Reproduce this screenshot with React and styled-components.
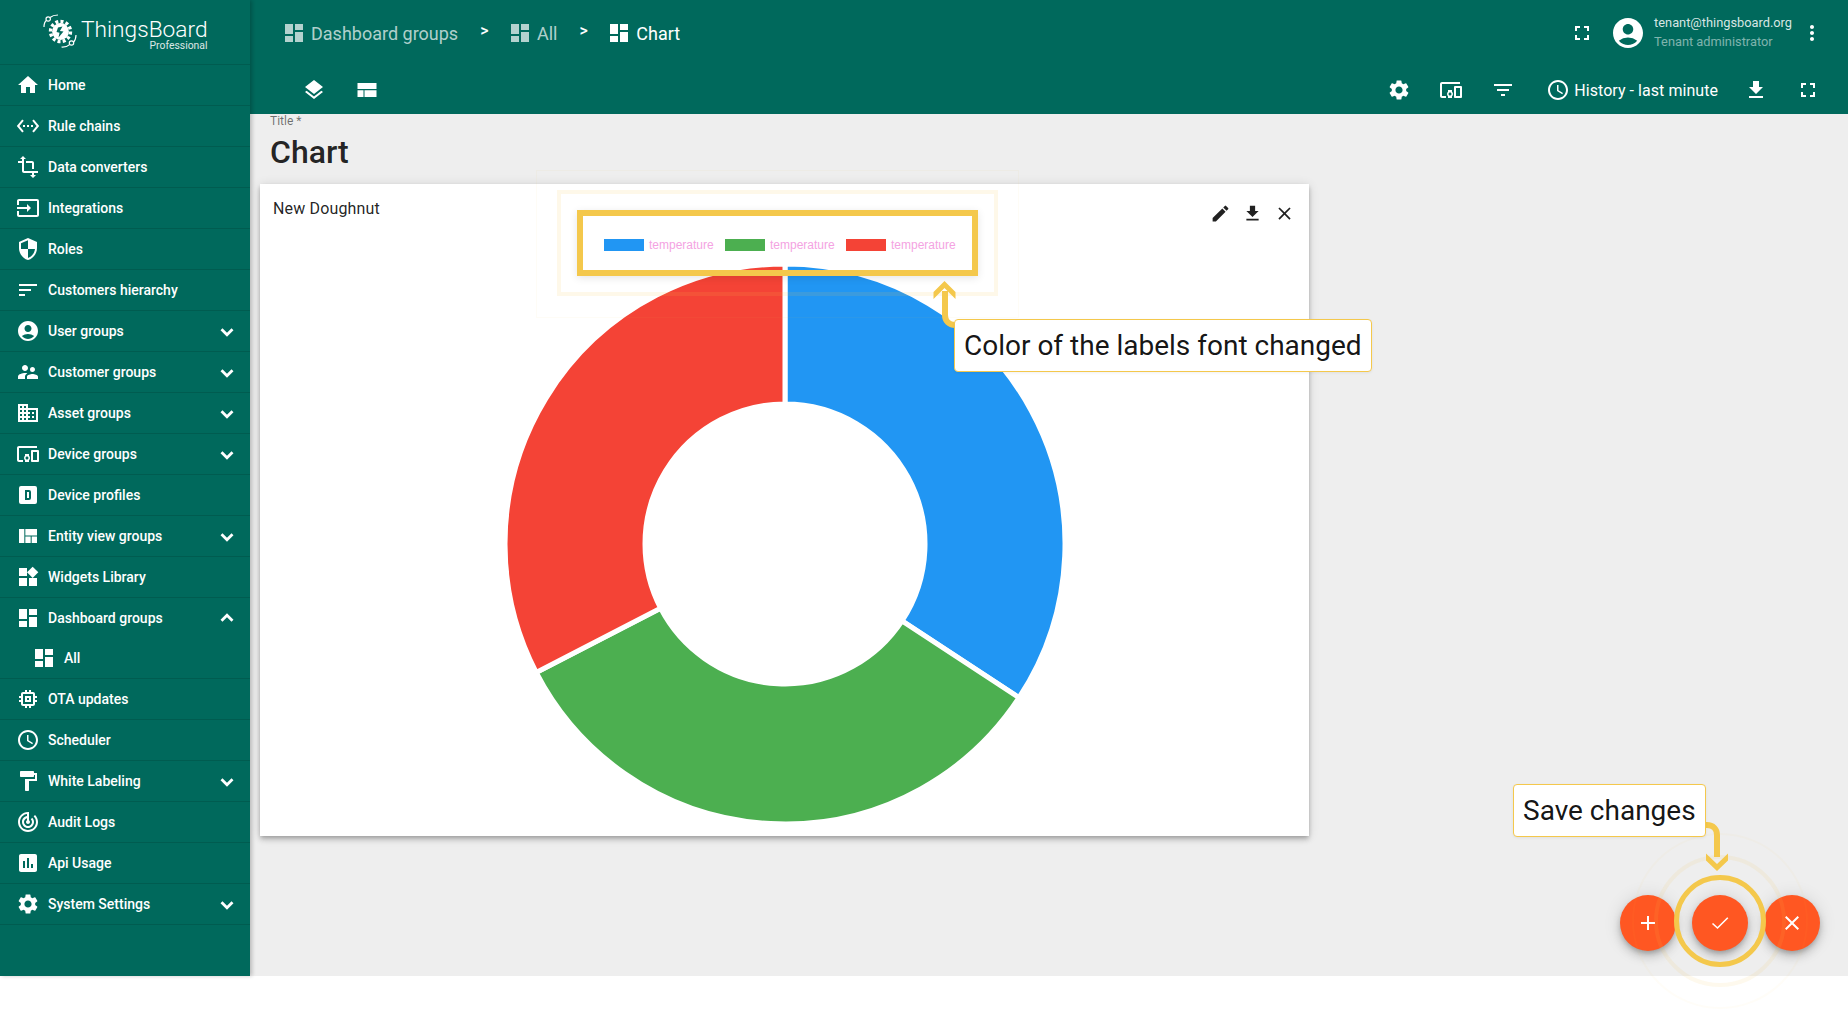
import React from "react";
import styled, { createGlobalStyle } from "styled-components";
import {
  MdHome, MdSettingsEthernet, MdTransform, MdInput, MdSecurity, MdSort, MdAccountCircle,
  MdSupervisorAccount, MdDomain, MdDevicesOther, MdViewQuilt, MdWidgets, MdDashboard, MdMemory,
  MdSchedule, MdFormatPaint, MdTrackChanges, MdInsertChart, MdSettings,
  MdLayers, MdFullscreen, MdFileDownload, MdFilterList, MdMoreVert, MdEdit, MdClose, MdAdd,
} from "react-icons/md";

const Global = createGlobalStyle`
  html, body { margin: 0; padding: 0; background: #fff; }
  body { font-family: Roboto, "Liberation Sans", sans-serif; }
  * { box-sizing: border-box; }
`;

const Page = styled.div`
  position: relative;
  width: 1848px;
  height: 1010px;
  overflow: hidden;
  background: #fff;
`;
const Shell = styled.div`
  display: flex;
  height: 976px;
`;
const Sidebar = styled.nav`
  flex: 0 0 250px;
  background: #00695c;
  color: #fff;
  box-shadow: 2px 0 4px rgba(0, 0, 0, 0.22);
  position: relative;
  z-index: 2;
`;
const LogoBar = styled.div`
  height: 65px;
  border-bottom: 1px solid rgba(0, 0, 0, 0.12);
  display: flex;
  align-items: flex-start;
  padding: 14px 0 0 43px;
`;
const LogoText = styled.div`
  margin-left: 4px;
  display: flex;
  flex-direction: column;
  align-items: flex-end;
  color: #fff;
`;
const LogoName = styled.span`
  font-size: 22.7px;
  font-weight: 300;
  line-height: 22px;
  margin-top: 5px;
`;
const LogoSub = styled.span`
  font-size: 10.4px;
  line-height: 10px;
  opacity: 0.85;
`;
const MenuRow = styled.div`
  height: ${(p) => (p.$open ? 40 : 41)}px;
  display: flex;
  align-items: center;
  gap: 8px;
  padding-left: ${(p) => (p.$child ? 32 : 16)}px;
  padding-right: 11.5px;
  font-size: 14px;
  font-weight: 500;
  border-bottom: ${(p) => (p.$open ? "0" : "1px solid rgba(0,0,0,0.12)")};
  svg { flex: none; }
`;
const MenuLabel = styled.span`
  flex: 1;
`;
const ChevronSvg = styled.svg`
  fill: none;
  stroke: currentColor;
  stroke-width: 2.8;
  margin-top: ${(p) => (p.$up ? 0 : 1)}px;
`;
const Chevron = ({ up }) => (
  <ChevronSvg $up={up} width="24" height="24" viewBox="0 0 24 24">
    <path d={up ? "M6.500 14.700 12 9.200l5.500 5.500" : "M6.500 9.300 12 14.800l5.500-5.500"} />
  </ChevronSvg>
);
const Main = styled.main`
  flex: 1;
  display: flex;
  flex-direction: column;
  background: #eeeeee;
  min-width: 0;
`;
const TopBar = styled.header`
  height: 114px;
  background: #00695c;
  color: #fff;
  display: flex;
  flex-direction: column;
`;
const TopRow = styled.div`
  height: 66px;
  display: flex;
  align-items: center;
  padding: 0 24px 0 32px;
`;
const Crumb = styled.span`
  display: flex;
  align-items: center;
  gap: 5px;
  font-size: 18px;
  color: ${(p) => (p.$current ? "#fff" : "rgba(255,255,255,0.7)")};
`;
const CrumbSep = styled.span`
  font-size: 16px;
  font-weight: 500;
  margin: -5px 19.5px 0 22px;
`;
const Spacer = styled.div`
  flex: 1;
`;
const IconBtn = styled.span`
  flex: none;
  width: ${(p) => p.$w || 40}px;
  height: 40px;
  display: flex;
  align-items: center;
  justify-content: center;
  color: #fff;
`;
const AvatarBtn = styled(IconBtn)`
  margin-left: 8px;
`;
const User = styled.div`
  display: flex;
  flex-direction: column;
  margin: -2px 8px 0 8px;
  font-size: 12.8px;
  gap: 4px;
`;
const UserMail = styled.span`
  line-height: 15px;
  color: rgba(255, 255, 255, 0.85);
`;
const UserRole = styled.span`
  line-height: 15px;
  color: rgba(255, 255, 255, 0.5);
`;
const ToolRow = styled.div`
  height: 48px;
  display: flex;
  align-items: center;
  gap: 12px;
  padding: 0 20px 0 44px;
`;
const History = styled.span`
  display: flex;
  align-items: center;
  gap: 4px;
  font-size: 16px;
  letter-spacing: 0.05px;
  margin: 0 6px 0 11px;
`;
const Content = styled.div`
  flex: 1;
  padding: 0 0 0 10px;
`;
const TitleBlock = styled.div`
  height: 70px;
  padding: 1px 0 0 10px;
`;
const TitleLabel = styled.div`
  font-size: 12px;
  line-height: 13px;
  color: rgba(0, 0, 0, 0.54);
`;
const TitleText = styled.div`
  font-size: 32px;
  font-weight: 500;
  line-height: 38px;
  margin-top: 5px;
  color: rgba(0, 0, 0, 0.87);
`;
const Card = styled.section`
  width: 1049px;
  height: 652px;
  background: #fff;
  box-shadow: 0 2px 4px -1px rgba(0, 0, 0, 0.2), 0 4px 5px rgba(0, 0, 0, 0.14), 0 1px 10px rgba(0, 0, 0, 0.12);
  display: flex;
  flex-direction: column;
  align-items: center;
`;
const CardHead = styled.div`
  width: 100%;
  height: 54px;
  display: flex;
  justify-content: space-between;
  padding: 13px 9px 0 13px;
`;
const CardTitle = styled.div`
  font-size: 16px;
  line-height: 24px;
  letter-spacing: 0.15px;
  color: rgba(0, 0, 0, 0.87);
`;
const CardActions = styled.div`
  display: flex;
  align-items: flex-start;
`;
const CardBtn = styled.span`
  width: 32px;
  height: 32px;
  display: flex;
  align-items: center;
  justify-content: center;
  color: rgba(0, 0, 0, 0.87);
`;
const Legend = styled.div`
  display: flex;
  align-items: center;
  height: 14px;
  margin: 0 9.6px 12px 0;
  font-family: "Liberation Sans", Arial, sans-serif;
  font-size: 12px;
  color: #f4a3e2;
`;
const LegendItem = styled.span`
  display: flex;
  align-items: center;
  gap: 5.3px;
  margin-left: 11px;
  &:first-child { margin-left: 0; }
`;
const Swatch = styled.i`
  display: block;
  width: 40px;
  height: 12px;
  background: ${(p) => p.$color};
`;
const Chart = styled.svg`
  display: block;
  flex: none;
`;
const FrameMain = styled.div`
  position: absolute;
  left: 577px;
  top: 210px;
  width: 401px;
  height: 66px;
  border: 6px solid #f4c84c;
  box-shadow: 0 2px 8px rgba(0, 0, 0, 0.1);
`;
const FrameHalo = styled.div`
  position: absolute;
  left: 557px;
  top: 190px;
  width: 441px;
  height: 106px;
  border: 4px solid rgba(244, 200, 76, 0.12);
`;
const FrameHaloOuter = styled.div`
  position: absolute;
  left: 536px;
  top: 170px;
  width: 483px;
  height: 148px;
  border: 1px solid rgba(244, 200, 76, 0.05);
`;
const Callout = styled.div`
  position: absolute;
  left: ${(p) => p.$x}px;
  top: ${(p) => p.$y}px;
  height: 53px;
  display: flex;
  align-items: center;
  padding: 0 9px;
  background: #fff;
  border: 1px solid #f4c84c;
  border-radius: 4px;
  font-size: 28px;
  color: rgba(0, 0, 0, 0.93);
  white-space: nowrap;
  box-shadow: 0 1px 3px rgba(0, 0, 0, 0.06);
`;
const ArrowLayer = styled.svg`
  position: absolute;
  left: 0;
  top: 0;
  pointer-events: none;
`;
const Fab = styled.span`
  position: absolute;
  left: ${(p) => p.$x - 28}px;
  top: 895px;
  width: 56px;
  height: 56px;
  border-radius: 50%;
  background: #ff5722;
  color: #fff;
  display: flex;
  align-items: center;
  justify-content: center;
  box-shadow: 0 3px 5px -1px rgba(0, 0, 0, 0.2), 0 6px 10px rgba(0, 0, 0, 0.14), 0 1px 18px rgba(0, 0, 0, 0.12);
`;
const Ring = styled.div`
  position: absolute;
  left: ${(p) => 1720 - p.$r}px;
  top: ${(p) => 921 - p.$r}px;
  width: ${(p) => p.$r * 2}px;
  height: ${(p) => p.$r * 2}px;
  border-radius: 50%;
  border: ${(p) => p.$w}px solid ${(p) => p.$color};
`;

const DBox = ({ size = 24 }) => (
  <svg width={size} height={size} viewBox="0 0 24 24" fill="currentColor">
    <path fillRule="evenodd" d="M9 7v10h4a2 2 0 0 0 2-2V9a2 2 0 0 0-2-2H9m2 2h2v6h-2V9M5 3h14a2 2 0 0 1 2 2v14a2 2 0 0 1-2 2H5a2 2 0 0 1-2-2V5a2 2 0 0 1 2-2Z" />
  </svg>
);
const TableIcon = ({ size = 24 }) => (
  <svg width={size} height={size} viewBox="0 0 24 24" fill="currentColor">
    <path d="M2.500 5h19v6h-19zM2.500 12.200h6V19h-6zM9.500 12.200h12V19h-12z" />
  </svg>
);
const ThinCheck = () => (
  <svg width="24" height="24" viewBox="0 0 24 24" fill="none" stroke="currentColor" strokeWidth="1.6">
    <path d="M4.500 12.500 9.500 17 19.800 6.800" />
  </svg>
);
const Logo = () => (
  <svg width="34" height="34" viewBox="0 0 34 34" fill="none" stroke="#fff">
    <path d="M1 13C1 10 2.500 7 3.600 6.200M7 3.500C9 1.800 12 1 15 1" strokeWidth="1.2" />
    <circle cx="5.200" cy="5" r="2.200" strokeWidth="1.2" />
    <path d="M33 21c0 3-1.300 6-2.600 7.200M26.600 30.600C24.600 32.400 21.400 33.200 18.500 33" strokeWidth="1.2" />
    <circle cx="28.500" cy="29" r="2.200" strokeWidth="1.2" />
    <circle cx="17.500" cy="17.500" r="8.400" fill="#fff" stroke="none" />
    <circle cx="17.500" cy="17.500" r="10" strokeWidth="3.400" strokeDasharray="3 2.200" />
    <path d="M15 13.500l4.500-1-2.600 4.500 3.600.6-5 5.800 1-4.600-3-.7z" fill="#00695c" stroke="none" />
  </svg>
);

const arc = (deg, r) => {
  const a = ((deg - 90) * Math.PI) / 180;
  return `${280 + r * Math.cos(a)} ${280 + r * Math.sin(a)}`;
};
const slice = (from, to) =>
  `M${arc(from, 280)}A280 280 0 0 1 ${arc(to, 280)}L${arc(to, 140)}A140 140 0 0 0 ${arc(from, 140)}Z`;

const SLICES = [
  { from: 0, to: 123.3, color: "#2196f3" },
  { from: 123.3, to: 242.7, color: "#4caf50" },
  { from: 242.7, to: 360, color: "#f44336" },
];
const MENU = [
  { label: "Home", icon: MdHome },
  { label: "Rule chains", icon: MdSettingsEthernet },
  { label: "Data converters", icon: MdTransform },
  { label: "Integrations", icon: MdInput },
  { label: "Roles", icon: MdSecurity },
  { label: "Customers hierarchy", icon: MdSort },
  { label: "User groups", icon: MdAccountCircle, more: true },
  { label: "Customer groups", icon: MdSupervisorAccount, more: true },
  { label: "Asset groups", icon: MdDomain, more: true },
  { label: "Device groups", icon: MdDevicesOther, more: true },
  { label: "Device profiles", icon: DBox },
  { label: "Entity view groups", icon: MdViewQuilt, more: true },
  { label: "Widgets Library", icon: MdWidgets },
  { label: "Dashboard groups", icon: MdDashboard, open: true },
  { label: "All", icon: MdDashboard, child: true },
  { label: "OTA updates", icon: MdMemory },
  { label: "Scheduler", icon: MdSchedule },
  { label: "White Labeling", icon: MdFormatPaint, more: true },
  { label: "Audit Logs", icon: MdTrackChanges },
  { label: "Api Usage", icon: MdInsertChart },
  { label: "System Settings", icon: MdSettings, more: true },
];

export default function App() {
  return (
    <Page>
      <Global />
      <Shell>
        <Sidebar>
          <LogoBar>
            <Logo />
            <LogoText>
              <LogoName>ThingsBoard</LogoName>
              <LogoSub>Professional</LogoSub>
            </LogoText>
          </LogoBar>
          {MENU.map(({ label, icon: Icon, more, open, child }) => (
            <MenuRow key={label} $child={child} $open={open}>
              <Icon size={24} />
              <MenuLabel>{label}</MenuLabel>
              {more && <Chevron />}
              {open && <Chevron up />}
            </MenuRow>
          ))}
        </Sidebar>
        <Main>
          <TopBar>
            <TopRow>
              <Crumb><MdDashboard size={24} />Dashboard groups</Crumb>
              <CrumbSep>&gt;</CrumbSep>
              <Crumb><MdDashboard size={24} />All</Crumb>
              <CrumbSep>&gt;</CrumbSep>
              <Crumb $current><MdDashboard size={24} />Chart</Crumb>
              <Spacer />
              <IconBtn><MdFullscreen size={24} /></IconBtn>
              <AvatarBtn $w={36}><MdAccountCircle size={36} /></AvatarBtn>
              <User>
                <UserMail>tenant@thingsboard.org</UserMail>
                <UserRole>Tenant administrator</UserRole>
              </User>
              <IconBtn $w={24}><MdMoreVert size={24} /></IconBtn>
            </TopRow>
            <ToolRow>
              <IconBtn><MdLayers size={24} /></IconBtn>
              <IconBtn $w={41}><TableIcon size={24} /></IconBtn>
              <Spacer />
              <IconBtn><MdSettings size={24} /></IconBtn>
              <IconBtn><MdDevicesOther size={24} /></IconBtn>
              <IconBtn><MdFilterList size={24} /></IconBtn>
              <History><MdSchedule size={24} />History - last minute</History>
              <IconBtn><MdFileDownload size={24} /></IconBtn>
              <IconBtn><MdFullscreen size={24} /></IconBtn>
            </ToolRow>
          </TopBar>
          <Content>
            <TitleBlock>
              <TitleLabel>Title *</TitleLabel>
              <TitleText>Chart</TitleText>
            </TitleBlock>
            <Card>
              <CardHead>
                <CardTitle>New Doughnut</CardTitle>
                <CardActions>
                  <CardBtn><MdEdit size={21} /></CardBtn>
                  <CardBtn><MdFileDownload size={21} /></CardBtn>
                  <CardBtn><MdClose size={21} /></CardBtn>
                </CardActions>
              </CardHead>
              <Legend>
                {SLICES.map((s) => (
                  <LegendItem key={s.color}>
                    <Swatch $color={s.color} />
                    temperature
                  </LegendItem>
                ))}
              </Legend>
              <Chart width="560" height="560" viewBox="0 0 560 560">
                {SLICES.map((s) => (
                  <path key={s.color} d={slice(s.from, s.to)} fill={s.color} stroke="#fff" strokeWidth="5" />
                ))}
              </Chart>
            </Card>
          </Content>
        </Main>
      </Shell>

      <FrameHaloOuter />
      <FrameHalo />
      <FrameMain />
      <Fab $x={1648}><MdAdd size={24} /></Fab>
      <Fab $x={1720}><ThinCheck /></Fab>
      <Fab $x={1792}><MdClose size={24} /></Fab>
      <Ring $r={88} $w={2} $color="rgba(244,200,76,0.04)" />
      <Ring $r={66} $w={4} $color="rgba(244,200,76,0.1)" />
      <Ring $r={46} $w={5} $color="#f4c84c" />
      <ArrowLayer width="1848" height="1010" viewBox="0 0 1848 1010" fill="none">
        <path d="M958 325h-3c-6 0-10-4-10-10v-24" stroke="#f4c84c" strokeWidth="6" />
        <path d="M944.500 281l11 11v7l-11-11-11 11v-7z" fill="#f4c84c" />
        <path d="M1704 825h3c6 0 10 4 10 10v22" stroke="#f4c84c" strokeWidth="6" />
        <path d="M1717 871l11-10.500v-7l-11 10.500-11-10.500v7z" fill="#f4c84c" />
      </ArrowLayer>
      <Callout $x={954} $y={319}>Color of the labels font changed</Callout>
      <Callout $x={1513} $y={784}>Save changes</Callout>
    </Page>
  );
}
